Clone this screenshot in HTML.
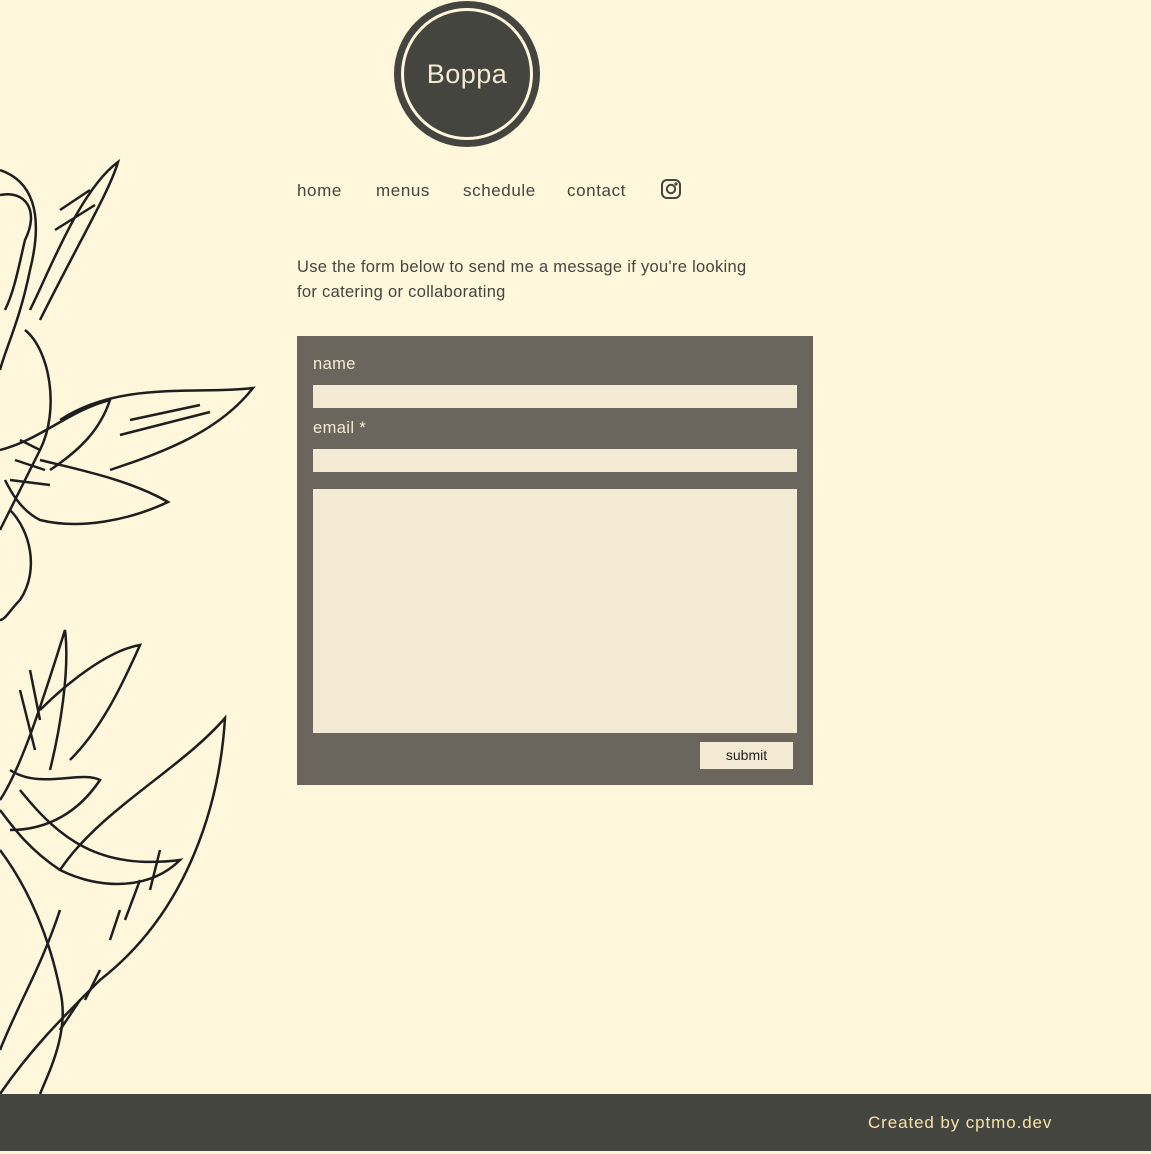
<!DOCTYPE html>
<html><head><meta charset="utf-8"><style>
*{margin:0;padding:0;box-sizing:border-box}
body{width:1151px;height:1154px;background:#fff7dc;font-family:"Liberation Sans",sans-serif;position:relative;overflow:hidden;color:#454540}
.logo{position:absolute;left:394px;top:1px;width:146px;height:146px;border-radius:50%;background:#454540;}
.logo:after{content:"";position:absolute;left:7px;top:7px;right:7px;bottom:7px;border:3px solid #fff7dc;border-radius:50%}
.logo span{position:absolute;left:0;right:0;top:58px;text-align:center;color:#f3ead3;font-size:27px;letter-spacing:.5px}
.nav{position:absolute;top:181px;font-size:17px;color:#454540;letter-spacing:.6px}
p.intro{position:absolute;left:297px;top:255px;width:480px;font-size:16.5px;line-height:25px;color:#454540;letter-spacing:.3px}
.form{position:absolute;left:297px;top:336px;width:516px;height:449px;background:#6a665d}
.lbl{position:absolute;left:16px;color:#f6ecd2;font-size:16.5px;letter-spacing:.4px}
.in{position:absolute;left:16px;width:484px;background:#f3ead3}
.btn{position:absolute;left:403px;top:406px;width:93px;height:27px;background:#f3ead3;color:#222;font-size:14px;text-align:center;line-height:27px}
footer{position:absolute;left:0;top:1094px;width:1151px;height:57px;background:#454540}
footer span{position:absolute;left:868px;top:19px;color:#f6e3a8;font-size:17px;letter-spacing:.9px}
</style></head><body>
<svg style="position:absolute;left:0;top:150px" width="260" height="944" fill="none" stroke="#1e1e1e" stroke-width="2.5">
<path d="M0 20 C30 30 45 60 30 120 C20 170 5 200 0 220"/>
<path d="M0 45 C25 40 40 60 25 90 C20 110 15 140 5 160"/>
<path d="M30 160 C50 120 80 40 118 12 C110 40 80 90 40 170"/>
<path d="M60 60 L90 40 M55 80 L95 55"/>
<path d="M25 180 C50 200 60 260 40 300 C20 340 10 360 0 380"/>
<path d="M0 300 C40 290 70 260 110 250 C100 280 80 300 50 320"/>
<path d="M60 270 C120 230 200 245 253 238 C220 280 170 300 110 320"/>
<path d="M40 310 C80 320 130 330 168 352 C130 370 80 380 40 370 C20 360 10 340 5 330"/>
<path d="M10 360 C30 380 40 420 20 450 C10 460 5 470 0 470"/>
<path d="M20 290 L40 300 M15 310 L45 320 M10 330 L50 335 M130 270 L200 255 M120 285 L210 262"/>
<path d="M0 650 C20 620 40 560 65 480 C70 520 60 580 50 620"/>
<path d="M40 560 C70 530 110 500 140 495 C120 540 100 580 70 610"/>
<path d="M10 620 C40 640 80 620 100 630 C80 660 50 680 10 680"/>
<path d="M20 640 C60 690 100 720 180 710 C150 740 100 740 60 720 C30 700 15 680 0 660"/>
<path d="M60 720 C100 660 180 620 225 568 C220 650 190 760 100 830 C60 870 30 900 0 944"/>
<path d="M0 900 C20 850 40 820 60 760"/>
<path d="M120 760 L110 790 M140 730 L125 770 M160 700 L150 740 M100 820 L85 850 M80 850 L60 880 M30 520 L40 570 M20 540 L35 600"/>
<path d="M0 700 C30 740 50 790 60 840 C70 880 50 920 40 944"/>
</svg>
<div class="logo"><span>Boppa</span></div>
<div class="nav" style="left:297px">home</div>
<div class="nav" style="left:376px">menus</div>
<div class="nav" style="left:463px">schedule</div>
<div class="nav" style="left:567px">contact</div>
<svg style="position:absolute;left:661px;top:179px" width="20" height="20" fill="none" stroke="#454540" stroke-width="2"><rect x="1" y="1" width="18" height="18" rx="5"/><circle cx="10" cy="10" r="4.2"/><circle cx="15" cy="5" r=".6" fill="#454540"/></svg>
<p class="intro">Use the form below to send me a message if you're looking<br>for catering or collaborating</p>
<div class="form">
<div class="lbl" style="top:19px">name</div>
<div class="in" style="top:49px;height:23px"></div>
<div class="lbl" style="top:83px">email *</div>
<div class="in" style="top:113px;height:23px"></div>
<div class="in" style="top:153px;height:244px"></div>
<div class="btn">submit</div>
</div>
<footer><span>Created by cptmo.dev</span></footer>
</body></html>
